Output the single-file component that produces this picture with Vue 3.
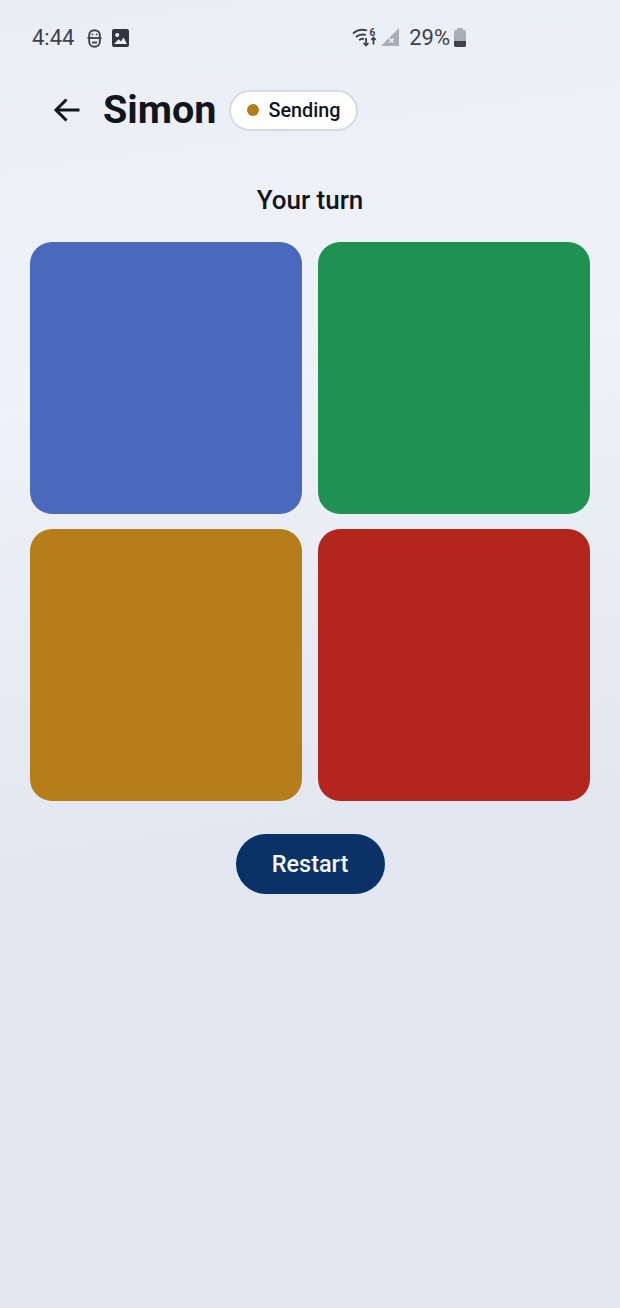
<template>
    <div class="screen">
        <!-- status bar -->
        <div class="status-bar">
            <div class="status-left">
                <span class="clock">4:44</span>
                <svg class="icon-face" width="15" height="19" viewBox="0 0 15 19" fill="none" stroke="#3d424a" stroke-width="1.9">
                    <path d="M2.2 8.5 V6 C2.2 3 4.6 1.2 7.5 1.2 C10.4 1.2 12.8 3 12.8 6 V8.5" />
                    <path d="M0.5 9 H14.5" />
                    <path d="M2.2 10 V12.5 C2.2 15.8 4.6 17.8 7.5 17.8 C10.4 17.8 12.8 15.8 12.8 12.5 V10" />
                    <path d="M5 13.5 H10" />
                    <circle cx="5.4" cy="5.4" r="0.9" fill="#3d424a" stroke="none" />
                    <circle cx="9.6" cy="5.4" r="0.9" fill="#3d424a" stroke="none" />
                </svg>
                <svg class="icon-image" width="17" height="18" viewBox="0 0 17 18">
                    <rect width="17" height="18" rx="2" fill="#32373f" />
                    <circle cx="5.2" cy="6" r="2" fill="#eef1f7" />
                    <path d="M2 15 L6.6 10.2 L9 12.6 L11.6 8.6 L15 15 Z" fill="#eef1f7" />
                </svg>
            </div>
            <div class="status-right">
                <svg class="icon-wifi" width="24" height="20" viewBox="0 0 24 20" fill="none" stroke="#3d424a" stroke-width="1.8">
                    <path d="M1 6.5 C5 3 10 2 15 3.5" />
                    <path d="M4 10 C7 7.5 10.5 7 14 8" />
                    <path d="M7 13 C9 12 10.5 11.5 12 11.8" />
                    <path d="M14 11 V18.5 M11.6 16 L14 18.5 L16.4 16" />
                    <path d="M21.5 17.5 V10.5 M19.4 12.8 L21.5 10.5 L23.6 12.8" />
                    <text x="17.5" y="8.5" class="wifi-six">6</text>
                </svg>
                <svg class="icon-signal" width="18" height="18" viewBox="0 0 18 18">
                    <path d="M18 0 V18 H0 Z" fill="#a9aeb6" />
                    <path d="M8.5 10.5 L12.5 14.5 M12.5 10.5 L8.5 14.5" stroke="#eef1f7" stroke-width="1.6" />
                </svg>
                <span class="battery-text">29%</span>
                <div class="battery">
                    <span class="battery-cap"></span>
                    <div class="battery-body">
                        <span class="battery-level"></span>
                    </div>
                </div>
            </div>
        </div>

        <!-- header -->
        <div class="header">
            <svg class="back" width="28" height="26" viewBox="0 0 28 26" fill="none" stroke="#11151c" stroke-width="3">
                <path d="M26.5 13 H3" />
                <path d="M13.5 2.5 L3 13 L13.5 23.5" />
            </svg>
            <h1 class="title">Simon</h1>
            <div class="badge">
                <span class="dot"></span>
                <span class="badge-text">{{ status }}</span>
            </div>
        </div>

        <div class="turn">Your turn</div>

        <div class="pads">
            <div v-for="pad in pads" :key="pad" class="pad" :class="pad"></div>
        </div>

        <div class="actions">
            <button class="restart">Restart</button>
        </div>
    </div>
</template>

<script setup>
const status = 'Sending'
const pads = ['blue', 'green', 'yellow', 'red']
</script>

<style>
html, body {
    margin: 0;
    padding: 0;
}
</style>

<style scoped>
.screen {
    box-sizing: border-box;
    width: 620px;
    height: 1308px;
    overflow: hidden;
    background: linear-gradient(172deg, #e9eef5 0%, #edf0f6 15%, #eef1f6 30%, #e2e7f1 62%, #e1e7f1 100%);
    font-family: Roboto, "Liberation Sans", sans-serif;
    color: #11151c;
}

.status-bar {
    display: flex;
    align-items: center;
    justify-content: space-between;
    height: 24px;
    padding: 25px 154px 0 32px;
}

.status-left,
.status-right {
    display: flex;
    align-items: center;
}

.clock,
.battery-text {
    font-size: 22px;
    color: #3d424a;
}

.icon-face {
    margin: 2px 0 0 13px;
}

.icon-image {
    margin: 2px 0 0 10px;
}

.wifi-six {
    font-size: 10px;
    font-weight: 700;
    fill: #3d424a;
    stroke: none;
    font-family: Roboto, sans-serif;
}

.icon-signal {
    margin-left: 5px;
}

.battery-text {
    margin-left: 10px;
}

.battery {
    display: flex;
    flex-direction: column;
    align-items: center;
    margin-left: 4px;
}

.battery-cap {
    width: 6px;
    height: 2px;
    background: #a9aeb6;
    border-radius: 1px 1px 0 0;
}

.battery-body {
    display: flex;
    align-items: flex-end;
    width: 12px;
    height: 17px;
    background: #a9aeb6;
    border-radius: 2px;
    overflow: hidden;
}

.battery-level {
    width: 100%;
    height: 6px;
    background: #3d424a;
}

.header {
    display: flex;
    align-items: center;
    height: 42px;
    margin-top: 40px;
    padding-left: 53px;
}

.back {
    flex: none;
}

.title {
    margin: 0 0 0 22px;
    font-size: 39.5px;
    font-weight: 700;
    line-height: 42px;
}

.badge {
    box-sizing: border-box;
    display: flex;
    align-items: center;
    height: 41px;
    margin-left: 13px;
    padding: 0 16px;
    background: #fff;
    border: 2px solid #d6dae2;
    border-radius: 21px;
}

.dot {
    width: 12px;
    height: 12px;
    border-radius: 50%;
    background: #b67d1b;
}

.badge-text {
    margin-left: 9px;
    font-size: 19.8px;
    font-weight: 500;
}

.turn {
    margin-top: 53px;
    font-size: 26px;
    font-weight: 500;
    line-height: 32px;
    text-align: center;
}

.pads {
    display: grid;
    grid-template-columns: 272px 272px;
    grid-auto-rows: 272px;
    gap: 15px 16px;
    margin-top: 26px;
    padding-left: 30px;
}

.pad {
    border-radius: 22px;
}

.blue { background: #4b69bc; }
.green { background: #1f9151; }
.yellow { background: #b67d1b; }
.red { background: #b2261e; }

.actions {
    display: flex;
    justify-content: center;
    margin-top: 33px;
}

.restart {
    width: 149px;
    height: 60px;
    padding: 0;
    border: none;
    border-radius: 30px;
    background: #0b3266;
    color: #f4f6fa;
    font-family: inherit;
    font-size: 23.5px;
    font-weight: 500;
}
</style>
